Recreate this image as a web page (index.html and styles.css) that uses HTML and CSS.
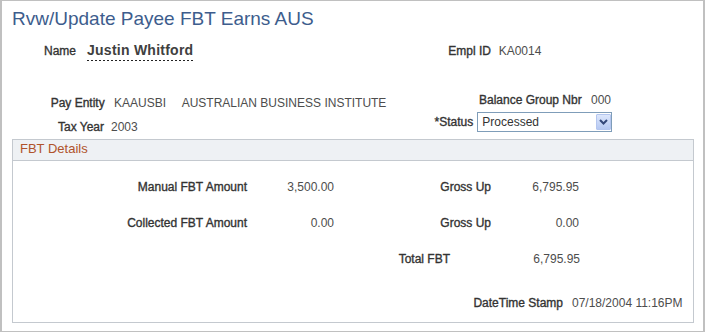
FILE: index.html
```html
<!DOCTYPE html>
<html lang="en">
<head>
<meta charset="utf-8">
<title>Rvw/Update Payee FBT Earns AUS</title>
<link rel="stylesheet" href="styles.css">
</head>
<body>
<div class="page">
  <h1 class="title">Rvw/Update Payee FBT Earns AUS</h1>
  <div class="header">
    <div class="col col-left">
      <div class="row row-name"><span class="lbl">Name</span><span class="emp-name">Justin Whitford</span></div>
      <div class="row row-entity"><span class="lbl lbl-entity">Pay Entity</span><span class="val val-code">KAAUSBI</span><span class="val">AUSTRALIAN BUSINESS INSTITUTE</span></div>
      <div class="row row-year"><span class="lbl lbl-year">Tax Year</span><span class="val">2003</span></div>
    </div>
    <div class="col col-right">
      <div class="row row-empl"><span class="lbl lbl-empl">Empl ID</span><span class="val">KA0014</span></div>
      <div class="row row-bal"><span class="lbl lbl-bal">Balance Group Nbr</span><span class="val">000</span></div>
      <div class="row row-status">
        <span class="lbl lbl-status">*Status</span>
        <div class="dropdown">
          <span class="dd-text">Processed</span>
          <span class="dd-btn"><svg width="9" height="6" viewBox="0 0 9 6"><polyline points="1,1 4.5,4.5 8,1" fill="none" stroke="#34487a" stroke-width="2"/></svg></span>
        </div>
      </div>
    </div>
  </div>
  <section class="group">
    <div class="group-hd">FBT Details</div>
    <div class="group-bd">
      <div class="amounts">
        <span class="lbl">Manual FBT Amount</span><span class="num">3,500.00</span><span class="lbl">Gross Up</span><span class="num">6,795.95</span>
        <span class="lbl">Collected FBT Amount</span><span class="num">0.00</span><span class="lbl">Gross Up</span><span class="num">0.00</span>
      </div>
      <div class="total"><span class="lbl">Total FBT</span><span class="num">6,795.95</span></div>
      <div class="stamp"><span class="lbl">DateTime Stamp</span><span class="val">07/18/2004 11:16PM</span></div>
    </div>
  </section>
</div>
</body>
</html>
```
FILE: styles.css
```css
* { box-sizing: border-box; }
html, body { margin: 0; padding: 0; background: #fff; }
body { font-family: "Liberation Sans", Arial, sans-serif; font-size: 12px; color: #4d4d4d; }

.page {
  width: 705px;
  height: 332px;
  border: 1px solid #c0c0c0;
  border-left-width: 2px;
  border-right-width: 2px;
  overflow: hidden;
}

.title {
  margin: 7px 0 0 10px;
  font-size: 19px;
  font-weight: normal;
  line-height: 22px;
  color: #3d5d8d;
}

.header { display: flex; margin-top: 12px; }
.col-left { width: 400px; }
.col-right { flex: 1; }

.row { display: flex; align-items: baseline; line-height: 14px; white-space: nowrap; }

.lbl { color: #333; -webkit-text-stroke: 0.35px #333; }
.val, .num { color: #4d4d4d; }

.row-name { padding-left: 42px; height: 19px; }
.row-name .lbl { margin-right: 11px; }
.emp-name {
  font-size: 14px;
  font-weight: bold;
  letter-spacing: 0.25px;
  line-height: 16px;
  color: #404040;
  padding-bottom: 3px;
  background: linear-gradient(to right, #222 50%, transparent 50%) left bottom / 4px 1px repeat-x;
}

.row-entity { margin-top: 35px; }
.lbl-entity { width: 102.7px; text-align: right; margin-right: 9.3px; }
.val-code { width: 67.7px; }

.row-year { margin-top: 10px; }
.lbl-year { width: 102px; text-align: right; margin-right: 7px; }

.row-empl { padding-left: 46.3px; padding-top: 1px; line-height: 16px; }
.lbl-empl { margin-right: 7.7px; }

.row-bal { margin-top: 34px; }
.lbl-bal { width: 179.7px; text-align: right; margin-right: 9.3px; }

.row-status { margin-top: 5px; line-height: 18px; }
.lbl-status { width: 71.3px; text-align: right; margin-right: 4px; }

.dropdown {
  display: flex;
  width: 135px;
  height: 20px;
  border: 1px solid #7f9db9;
  background: #fff;
}
.dd-text { flex: 1; padding-left: 4px; line-height: 18px; color: #333; }
.dd-btn {
  width: 15px;
  height: 16px;
  margin: 1px 0 1px 0;
  border: 1px solid #b4c6ef;
  border-radius: 1px;
  background: linear-gradient(#dde7fc, #b5c8f2);
  display: flex;
  align-items: center;
  justify-content: center;
}

.group {
  margin: 5px 0 0 10px;
  width: 682px;
  border: 1px solid #c4c9cf;
}
.group-hd {
  height: 21px;
  background: #eef1f4;
  border-bottom: 1px solid #c4c9cf;
  padding-left: 7px;
  font-size: 13px;
  line-height: 17px;
  color: #b0532b;
}
.group-bd { padding: 19px 0 12px 0; line-height: 14px; }

.amounts {
  display: grid;
  grid-template-columns: 234px 87px 157px 88px;
  row-gap: 22px;
  text-align: right;
}

.total {
  display: grid;
  grid-template-columns: 437px 130px;
  margin-top: 22px;
  text-align: right;
}

.stamp {
  display: grid;
  grid-template-columns: 550px auto;
  column-gap: 9px;
  margin-top: 30px;
}
.stamp .lbl { text-align: right; }
```
